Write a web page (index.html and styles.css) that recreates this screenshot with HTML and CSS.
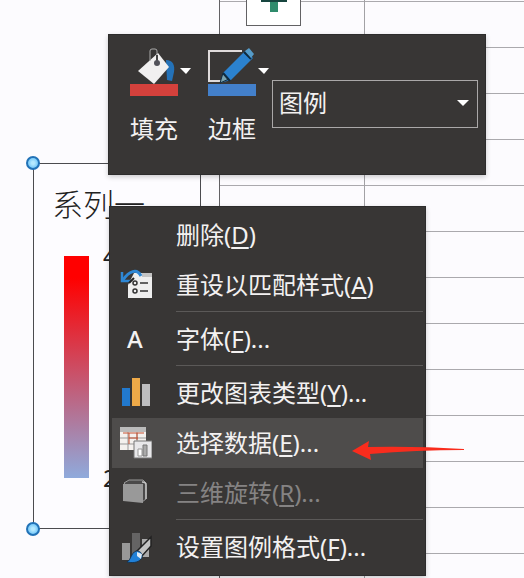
FILE: index.html
```html
<!DOCTYPE html>
<html lang="zh-CN">
<head>
<meta charset="utf-8">
<title>图例</title>
<link rel="stylesheet" href="styles.css">
</head>
<body>
<main class="sheet">
  <div class="cells"></div>

  <button class="add-element" type="button" aria-label="图表元素">
    <svg width="28" height="28" viewBox="0 0 28 28"><path d="M10 0h8v28h-8z" fill="#2f8b6c"/><path d="M1 10h26v8H1z" fill="#2f8b6c"/><path d="M1 16h26v2H1z" fill="#17453f"/></svg>
  </button>

  <section class="legend">
    <span class="handle handle-top"></span>
    <span class="handle handle-bottom"></span>
    <h1 class="legend-title">系列一</h1>
    <div class="scale">
      <div class="scale-bar"></div>
      <div class="scale-labels"><span>4</span><span>2</span></div>
    </div>
  </section>

  <div class="toolbar">
    <button class="tool" type="button">
      <svg width="62" height="50" viewBox="0 0 62 50">
        <path d="M36 13c7 0 9 5 8 12l-2 9-5-1z" fill="#2472b8"/>
        <path d="M28 6 39 20 24 37 8 24z" fill="#f1f0f0"/>
        <path d="M20 14V4q0-2 2-2h3q2 0 2 2v11" fill="none" stroke="#aaa" stroke-width="1"/>
        <path d="M27 8v6" stroke="#444" stroke-width="2"/>
        <circle cx="27" cy="16" r="3" fill="#52525a"/>
        <path d="M0 37h48v12H0z" fill="#d4413c"/>
        <path d="M50 21h11l-5 6z" fill="#fff"/>
      </svg>
      <span>填充</span>
    </button>
    <button class="tool" type="button">
      <svg width="62" height="50" viewBox="0 0 62 50">
        <path d="M34 4H1v30h13" fill="none" stroke="#dedada" stroke-width="2"/>
        <path d="m12 36 3-10L37 4l8 7-22 22z" fill="#2b82cf"/>
        <path d="m12 36 3-10 6 6z" fill="#7ba3ad" stroke="#102a3c" stroke-width="1"/>
        <path d="m15 26 7 8M36 5l7 7" stroke="#102a3c" stroke-width="2"/>
        <path d="m37 4 4-3 5 6-3 4z" fill="#559bc8"/>
        <path d="M0 37h48v12H0z" fill="#4380cb"/>
        <path d="M50 21h11l-5 6z" fill="#fff"/>
      </svg>
      <span>边框</span>
    </button>
    <label class="picker">
      <select aria-label="图表元素"><option>图例</option></select>
      <svg width="12" height="6" viewBox="0 0 12 6"><path d="M0 0h12L6 6z" fill="#fff"/></svg>
    </label>
  </div>

  <div class="menu" role="menu">
    <button class="item" type="button" role="menuitem">
      <span class="icon"></span><span>删除(<u>D</u>)</span>
    </button>
    <button class="item" type="button" role="menuitem">
      <svg class="icon" viewBox="0 0 32 32">
        <path d="M14 4h18v25H8V16z" fill="#eee"/>
        <path d="M22 4h10v4H22z" fill="#c4c4c4"/>
        <path d="M20 14h8M20 22h8" stroke="#333" stroke-width="1.5"/>
        <circle cx="15" cy="14" r="2" fill="none" stroke="#333" stroke-width="1.5"/>
        <circle cx="15" cy="22" r="2" fill="none" stroke="#333" stroke-width="1.5"/>
        <path d="M21 7C17-1 9 2 3 11" fill="none" stroke="#2e87d5" stroke-width="3"/>
        <path d="M2 3v9h9" fill="none" stroke="#2e87d5" stroke-width="2.5"/>
        <path d="m9 14 5-5" stroke="#222" stroke-width="2"/>
      </svg><span>重设以匹配样式(<u>A</u>)</span>
    </button>
    <hr>
    <button class="item" type="button" role="menuitem">
      <span class="icon letter">A</span><span>字体(<u>F</u>)...</span>
    </button>
    <hr>
    <button class="item" type="button" role="menuitem">
      <svg class="icon" viewBox="0 0 32 32">
        <path d="M2 11h8v18H2z" fill="#2279cd"/><path d="M12 1h8v28h-8z" fill="#efaa48"/><path d="M22 7h8v22h-8z" fill="#bdbdbf"/>
      </svg><span>更改图表类型(<u>Y</u>)...</span>
    </button>
    <button class="item selected" type="button" role="menuitem">
      <svg class="icon" viewBox="0 0 32 32">
        <path d="M0 0h26v23H0z" fill="#f4f1ee"/>
        <path d="M0 0h26v5H0z" fill="#bbb"/>
        <path d="M0 11h26M0 17h26M8 5v18M17 5v12" stroke="#999" stroke-width="1"/>
        <path d="M3 6h21M9 11h9M9 6v11M17 6v7" fill="none" stroke="#c75332" stroke-width="1"/>
        <path d="M14 14h18v17H14z" fill="#e8e8ea" stroke="#777" stroke-width="1"/>
        <path d="M18 22h4v7h-4z" fill="#fff" stroke="#999"/><path d="M23 18h4v11h-4z" fill="#aaa" stroke="#777"/>
      </svg><span>选择数据(<u>E</u>)...</span>
    </button>
    <button class="item" type="button" role="menuitem" disabled>
      <svg class="icon" viewBox="0 0 32 32">
        <path d="m4 6 5-3h14l3 3v16l-4 3z" fill="#4b4a4a" stroke="#999" stroke-width="1"/>
        <path d="M3 7h20v19L3 24z" fill="#999"/>
        <path d="M22 5q4 0 4 3v14" fill="none" stroke="#c2c2c2" stroke-width="1.5"/>
      </svg><span>三维旋转(<u>R</u>)...</span>
    </button>
    <hr>
    <button class="item" type="button" role="menuitem">
      <svg class="icon" viewBox="0 0 32 32">
        <path d="M2 12h8v17H2z" fill="#989898"/><path d="M12 2h8v25h-8z" fill="#656464"/><path d="M22 8h7v18h-7z" fill="#aaa"/>
        <path d="m17 20 14-14v9l-9 10z" fill="#c3c3c3" stroke="#222" stroke-width="1.5"/>
        <path d="M7 31c4-2 4-9 9-11 5-1 8 5 5 8-3 4-9 4-14 3z" fill="#2080d8" stroke="#183652" stroke-width="1"/>
        <path d="m17 21 5 2-1 5-4-3z" fill="#dceaf6"/>
      </svg><span>设置图例格式(<u>F</u>)...</span>
    </button>
  </div>

  <svg class="pointer" width="116" height="22" viewBox="0 0 116 22" aria-hidden="true"><path d="M1 12 18 2l-1 6q48-1 96 2v1q-48 0-94 4l1 6z" fill="#f92c1d"/></svg>
</main>
</body>
</html>
```

FILE: styles.css
```css
* {
  box-sizing: border-box;
}

body {
  margin: 0;
  background: #fcfbfe;
  font-family: "Noto Sans", "Noto Sans CJK SC", sans-serif;
  font-size: 24px;
  line-height: 32px;
}

button,
select {
  margin: 0;
  border: 0;
  border-radius: 0;
  padding: 0;
  background: none;
  color: inherit;
  font: inherit;
}

.sheet {
  position: relative;
  min-height: 100vh;
  padding-left: 219px;
  display: flex;
  overflow: hidden;
}

.cells {
  flex: 1;
  border-left: 1px solid #626164;
  background:
    linear-gradient(#a2a1a5, #a2a1a5) 144px 0 / 1px 100% no-repeat,
    repeating-linear-gradient(transparent 0 1px, #aaa9ad 1px 2px, transparent 2px 46px);
}

.add-element {
  position: absolute;
  left: 246px;
  top: -30px;
  width: 55px;
  height: 56px;
  display: flex;
  justify-content: center;
  align-items: flex-end;
  border: 1px solid #626164;
  padding-bottom: 13px;
  background: #fff;
}

.legend {
  position: absolute;
  left: 33px;
  top: 163px;
  width: 168px;
  border: 1px solid #4b4b4f;
  padding: 20px 18px 50px;
  background: #fdfcff;
  color: #222;
}

.legend-title {
  margin: 0 0 32px;
  font-size: 31px;
  font-weight: 300;
  line-height: 40px;
  white-space: nowrap;
}

.scale {
  display: flex;
  gap: 14px;
  margin-left: 12px;
}

.scale-bar {
  width: 25px;
  height: 222px;
  background: linear-gradient(#ff0000 10%, #8faadc);
}

.scale-labels {
  display: flex;
  flex-direction: column;
  justify-content: space-between;
  margin: -16px 0;
}

.handle {
  position: absolute;
  left: -8px;
  width: 14px;
  height: 14px;
  border: 2px solid #2272b7;
  border-radius: 50%;
  background: radial-gradient(#b5e9ff 20%, #53b6f5);
}

.handle-top {
  top: -8px;
}

.handle-bottom {
  bottom: -8px;
}

.toolbar,
.menu {
  position: absolute;
  background: #383635;
  color: #f3f1f1;
  box-shadow: 0 2px 5px #0003;
}

.toolbar {
  left: 108px;
  top: 34px;
  display: flex;
  align-items: center;
  border: 1px solid #2d2c2c;
  padding: 12px 7px 29px 21px;
}

.tool {
  display: flex;
  flex-direction: column;
  gap: 16px;
  align-items: flex-start;
  margin-right: 16px;
}

.tool svg {
  display: block;
}

.tool + .picker {
  margin-left: -14px;
}

.picker {
  position: relative;
  margin-top: 16px;
}

.picker select {
  display: block;
  appearance: none;
  width: 206px;
  height: 48px;
  border: 1px solid #aaa8a8;
  padding: 0 28px 2px 6px;
}

.picker svg {
  position: absolute;
  right: 9px;
  top: 20px;
}

.menu {
  left: 109px;
  top: 206px;
  min-width: 317px;
  border: 1px solid #2d2c2c;
  padding: 3px 2px;
}

.item {
  display: flex;
  align-items: center;
  gap: 24px;
  width: 100%;
  height: 50px;
  padding-left: 8px;
  text-align: left;
  white-space: nowrap;
}

.item:disabled {
  color: #858383;
}

.selected {
  background: #4e4c4b;
}

.item u {
  text-decoration-thickness: 2px;
  text-underline-offset: 3px;
}

.icon {
  flex: none;
  width: 32px;
  height: 32px;
}

.letter {
  padding-left: 7px;
  font-weight: 500;
}

.menu hr {
  height: 1px;
  margin: 1px 0 2px 64px;
  border: 0;
  background: #5b5958;
}

.pointer {
  position: absolute;
  left: 351px;
  top: 439px;
}
```
